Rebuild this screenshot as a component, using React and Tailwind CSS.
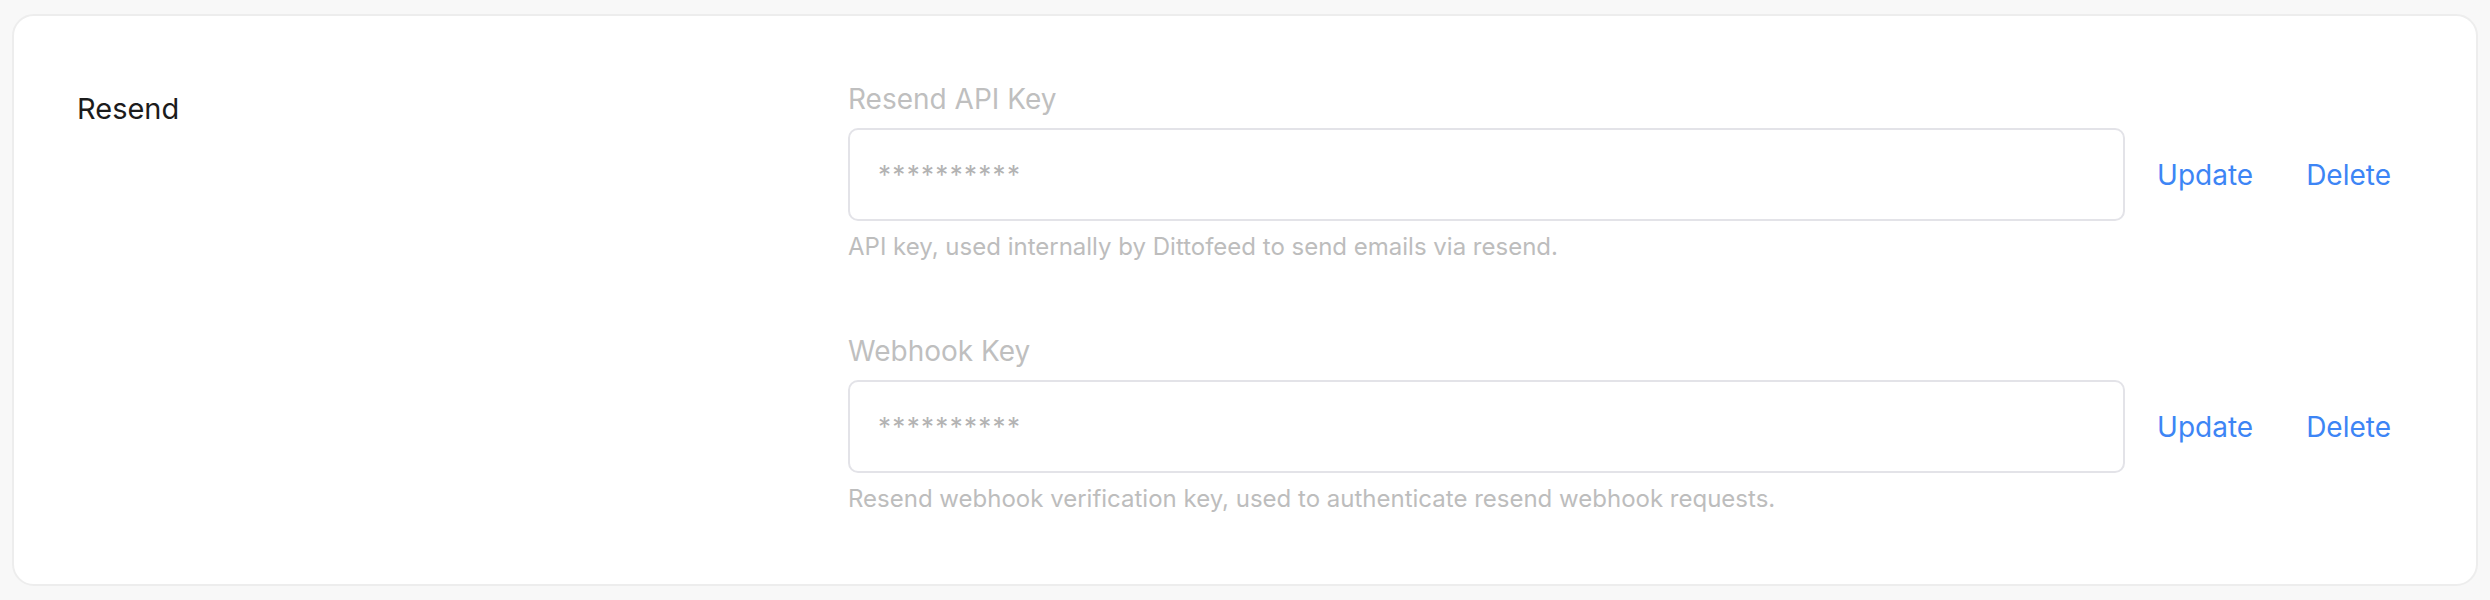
import React from "react";

const fields = [
  {
    id: "apiKey",
    label: "Resend API Key",
    helper: "API key, used internally by Dittofeed to send emails via resend.",
  },
  {
    id: "webhookKey",
    label: "Webhook Key",
    helper:
      "Resend webhook verification key, used to authenticate resend webhook requests.",
  },
];

function SecretField({ label, helper }) {
  return (
    <div className="flex flex-col">
      <div className="text-[28px] leading-[40px] text-[#bfbfbf]">{label}</div>
      <div className="flex items-center mt-[9px]">
        <div className="flex-1 h-[93px] border-2 border-[#e3e3e8] rounded-[10px] flex items-center pl-[28px] text-[26px] text-[#b3b3b3] tracking-[1.3px]">
          **********
        </div>
        <button className="ml-[32px] text-[28px] leading-[40px] text-[#3d85f5]">
          Update
        </button>
        <button className="ml-[53px] text-[28px] leading-[40px] text-[#3d85f5]">
          Delete
        </button>
      </div>
      <div className="mt-[10px] text-[24px] leading-[32px] text-[#bdbdbd]">
        {helper}
      </div>
    </div>
  );
}

export default function App() {
  return (
    <div
      className="w-[2490px] h-[600px] bg-[#f8f8f8] pt-[14px] px-[12px]"
      style={{ fontFamily: "Inter, 'Noto Sans', sans-serif" }}
    >
      <div className="h-[572px] bg-white border-2 border-[#ededed] rounded-[22px] flex pl-[63px] pr-[85px] pt-[63px]">
        {/* Section title */}
        <div className="w-[771px] shrink-0">
          <div className="mt-[10px] text-[29px] leading-[40px] text-[#1c1c1c]">
            Resend
          </div>
        </div>

        {/* Fields */}
        <div className="flex-1 flex flex-col gap-[68px]">
          {fields.map((f) => (
            <SecretField key={f.id} label={f.label} helper={f.helper} />
          ))}
        </div>
      </div>
    </div>
  );
}
